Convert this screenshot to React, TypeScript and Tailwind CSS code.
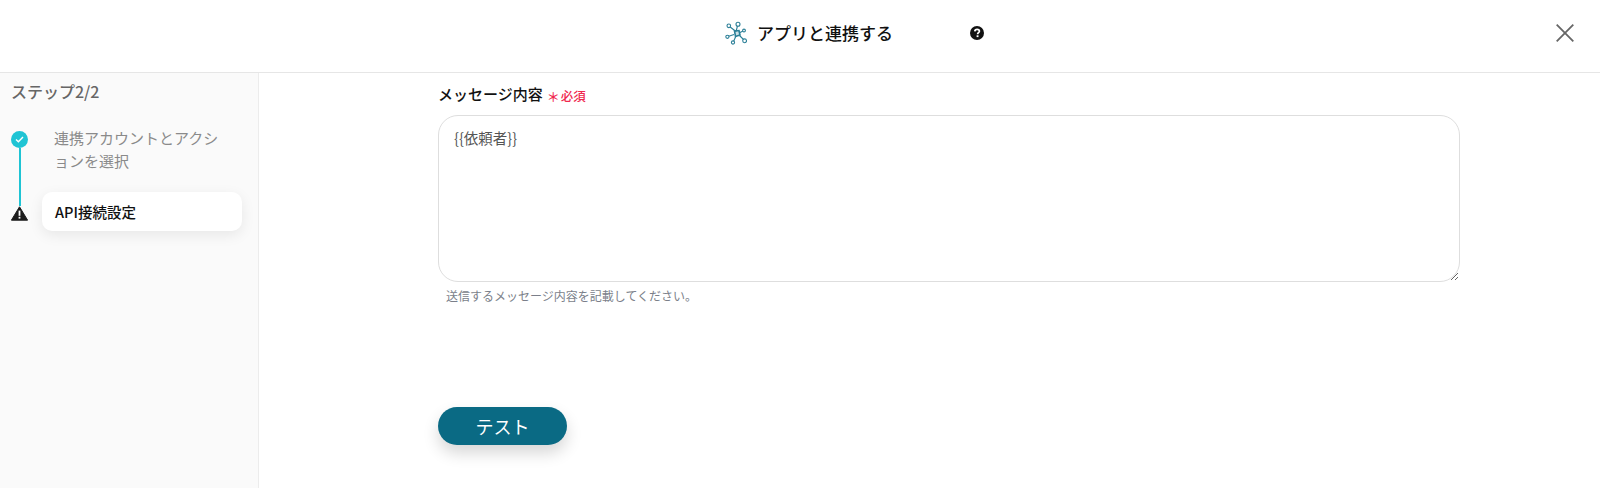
import React from 'react';

function NetworkIcon() {
  return (
    <svg width="22" height="24" viewBox="0 0 22 24" fill="none" stroke="#2b7f97" strokeWidth="1.1">
      <path d="M11 10.5 L12.5 5 M11 10.5 L4.5 5.5 M14 12 L18 10 M14.5 14.5 L19 19 M11 15 L8.5 20.5 M9 13.5 L3 15.5" />
      <path d="M9.5 10 L14 9.5 L15 14 L10.5 15.5 Z" fill="#2b7f97" fillOpacity="0.25" strokeWidth="1.6" />
      <circle cx="13" cy="3.2" r="2" fill="#fff" />
      <circle cx="3.8" cy="4.8" r="1.8" fill="#fff" />
      <circle cx="19" cy="9.5" r="1.4" fill="#fff" />
      <circle cx="19.6" cy="19.8" r="1.9" fill="#fff" />
      <circle cx="8" cy="21.5" r="1.6" fill="#fff" />
      <circle cx="2.4" cy="15.8" r="1.6" fill="#fff" />
    </svg>
  );
}

function HelpIcon() {
  return (
    <svg width="14" height="14" viewBox="0 0 14 14">
      <circle cx="7" cy="7" r="7" fill="#111" />
      <path d="M4.8 5.4 C4.9 4 5.9 3.3 7.1 3.3 C8.4 3.3 9.4 4.1 9.4 5.2 C9.4 6.7 7.6 6.7 7.6 8.2" fill="none" stroke="#fff" strokeWidth="1.7" />
      <rect x="6.6" y="9.3" width="1.9" height="1.8" fill="#fff" />
    </svg>
  );
}

function CloseIcon() {
  return (
    <svg width="18" height="18" viewBox="0 0 18 18" stroke="#666" strokeWidth="1.8" fill="none">
      <path d="M0.7 0.7 L17.3 17.3 M17.3 0.7 L0.7 17.3" />
    </svg>
  );
}

function CheckCircle() {
  return (
    <div className="flex h-[17px] w-[17px] items-center justify-center rounded-full bg-[#1fc4d4]">
      <svg width="9" height="7" viewBox="0 0 9 7" fill="none" stroke="#fff" strokeWidth="1.4">
        <path d="M1 3.5 L3.4 5.8 L8 1" />
      </svg>
    </div>
  );
}

function WarningIcon() {
  return (
    <svg width="17" height="15" viewBox="0 0 17 15">
      <path d="M8.5 0.8 L16.6 14.2 L0.4 14.2 Z" fill="#1c1c1c" stroke="#1c1c1c" strokeWidth="1" strokeLinejoin="round" />
      <rect x="7.6" y="4.6" width="1.8" height="5.2" fill="#fff" />
      <rect x="7.6" y="10.8" width="1.8" height="1.8" fill="#fff" />
    </svg>
  );
}

export default function App() {
  return (
    <div className="flex h-[488px] w-[1600px] flex-col overflow-hidden bg-white font-['Noto_Sans_CJK_JP','Noto_Sans',sans-serif]">
      <header className="flex h-[73px] shrink-0 items-center border-b border-[#e6e6e6] pb-[6px] pl-[725px] pr-[26px]">
        <NetworkIcon />
        <h1 className="ml-[10px] text-[17px] font-medium leading-6 text-[#111]">アプリと連携する</h1>
        <div className="ml-[77px]"><HelpIcon /></div>
        <button className="ml-auto"><CloseIcon /></button>
      </header>

      <div className="flex min-h-0 flex-1">
        <aside className="w-[259px] shrink-0 border-r border-[#ececec] bg-[#fafafa] pl-[11px] pt-[7px]">
          <div className="text-[16px] font-medium leading-[22px] text-[#666]">ステップ2/2</div>
          <div className="mt-[27px] flex">
            <div className="flex w-[17px] flex-col items-center pt-[2px]">
              <CheckCircle />
              <div className="h-[58px] w-[2px] bg-[#1fc4d4]" />
              <WarningIcon />
            </div>
            <div className="ml-[14px] w-[200px]">
              <p className="-mt-[3px] pl-[12px] pr-[18px] text-[15px] leading-[23px] text-[#8a8a8a]">連携アカウントとアクションを選択</p>
              <div className="mt-[20px] flex h-[39px] items-center rounded-[10px] bg-white pl-[13px] text-[14.5px] font-medium text-[#111] shadow-[0_4px_14px_rgba(0,0,0,0.08)]">API接続設定</div>
            </div>
          </div>
        </aside>

        <main className="flex-1 pl-[179px] pt-[9px]">
          <div className="flex h-[24px] items-center">
            <label className="text-[15px] font-medium leading-6 text-[#111]">メッセージ内容</label>
            <span className="ml-[4px] mt-[5px] text-[13px] font-medium leading-4 text-[#f0284f]">＊</span>
            <span className="ml-[1px] mt-[3px] text-[12.5px] font-medium leading-4 text-[#f0284f]">必須</span>
          </div>
          <textarea
            className="mt-[9px] block h-[167px] w-[1022px] rounded-[20px] border border-[#dedede] bg-white px-[15px] py-[11px] text-[14.5px] leading-[21px] text-[#555] outline-none"
            defaultValue="{{依頼者}}"
          />
          <p className="mt-[5px] pl-[8px] text-[12px] leading-[18px] text-[#7b7f8a]">送信するメッセージ内容を記載してください。</p>
          <button className="mt-[102px] h-[38px] w-[129px] rounded-full bg-[#0a6a84] text-[18px] text-white shadow-[0_8px_16px_rgba(0,0,0,0.16)]">テスト</button>
        </main>
      </div>
    </div>
  );
}
